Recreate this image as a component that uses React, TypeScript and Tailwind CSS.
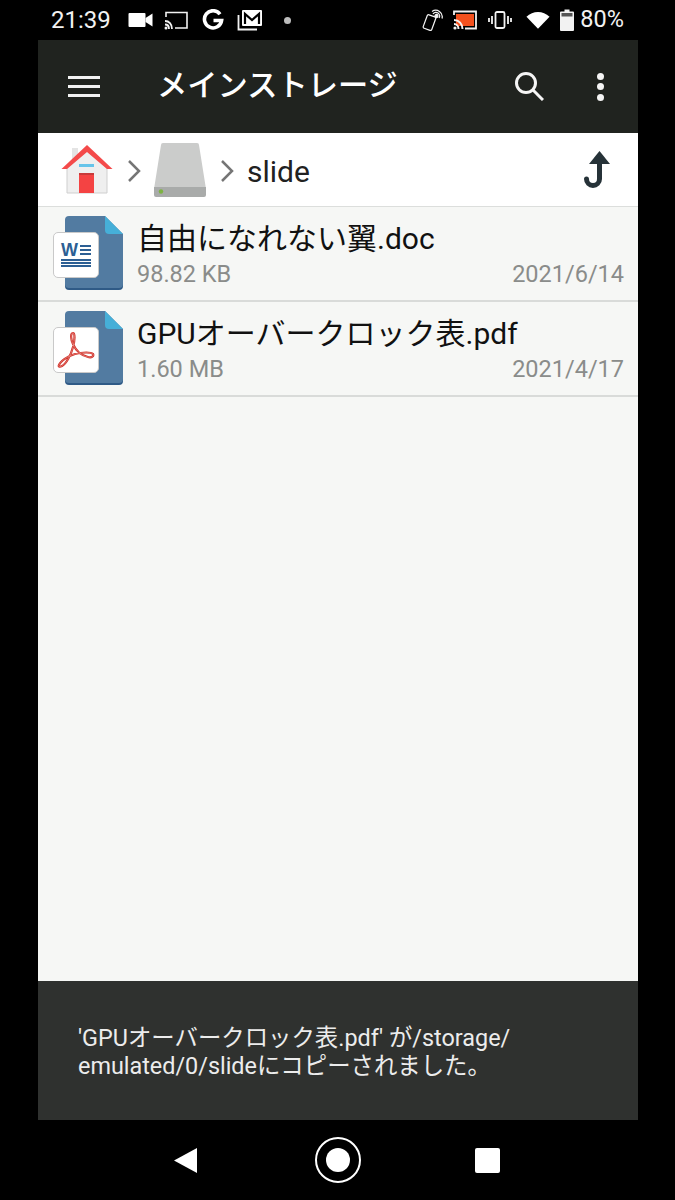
import React from "react";

const font = "font-['Roboto','Noto_Sans_CJK_JP',sans-serif]";

const StatusBar = () => {
  return (
    <div className="h-10 flex items-center justify-between text-[#f2f2f2] pl-[51px] pr-[51px]">
      <div className="flex items-center">
        <span className="text-[24px] leading-none w-[76px]">21:39</span>
        <svg width="25" height="16" viewBox="0 0 24 16" className="ml-[1px]" fill="#fff">
          <rect x="0" y="1" width="17" height="14" rx="1" />
          <path d="M17 6 L24 1.5 V14.5 L17 10z" />
        </svg>
        <svg width="24" height="20" viewBox="0 0 24 20" className="ml-[11px]" fill="none" stroke="#f2f2f2" strokeWidth="1.6">
          <path d="M2 7V2.5H23V18H11" />
          <path d="M1 11c4 0 7 3 7 8M1 14.5c2.500 0 4 2 4 4.500" strokeWidth="1.800" />
          <circle cx="2" cy="18" r="1.500" fill="#f2f2f2" stroke="none" />
        </svg>
        <svg width="22" height="22" viewBox="0 0 22 22" className="ml-[14px]" fill="none" stroke="#fff" strokeWidth="3.600">
          <path d="M18 5.200A8.600 8.600 0 1 0 19.600 11.500H11.500" />
        </svg>
        <svg width="26" height="22" viewBox="0 0 26 22" className="ml-[13px]">
          <path d="M1.500 6V20.500H20" fill="none" stroke="#f2f2f2" strokeWidth="1.800" />
          <rect x="5" y="1" width="20" height="16" rx="1" fill="#fff" />
          <path d="M8 15V5l7 6 7-6v10" fill="none" stroke="#000" strokeWidth="2.200" />
        </svg>
        <div className="w-[7px] h-[7px] rounded-full bg-[#bdbdbd] ml-[21px]" />
      </div>
      <div className="flex items-center">
        <svg width="22" height="22" viewBox="0 0 22 22" fill="none" stroke="#f2f2f2" strokeWidth="1.300">
          <rect x="3" y="7" width="9.500" height="15" rx="1.500" transform="rotate(20 8 14) scale(0.95)" />
          <path d="M11 5a3.500 3.500 0 0 1 6 4M10 2.500a6.500 6.500 0 0 1 10 7" />
          <circle cx="14.500" cy="7" r="1.500" fill="#f2f2f2" />
        </svg>
        <svg width="24" height="20" viewBox="0 0 24 20" className="ml-[9px]">
          <rect x="3" y="4" width="18" height="12" fill="#f4511e" />
          <path d="M1 5V1.500H23V18.500H12" fill="none" stroke="#f2f2f2" strokeWidth="1.800" />
          <path d="M1 10c5 0 8.500 4 8.500 9M1 14c2.500 0 4.500 2 4.500 5" fill="none" stroke="#f2f2f2" strokeWidth="2" />
          <circle cx="2" cy="18" r="1.600" fill="#f2f2f2" />
        </svg>
        <svg width="24" height="18" viewBox="0 0 24 18" className="ml-[11px]" fill="none" stroke="#f2f2f2">
          <rect x="7.500" y="1" width="9" height="16" rx="1.500" strokeWidth="1.800" />
          <path d="M4 5v8M1 7v4M20 5v8M23 7v4" strokeWidth="1.800" />
        </svg>
        <svg width="24" height="20" viewBox="0 0 26 20" className="ml-[14px]" fill="#fff">
          <path d="M0.500 6.500C7.500 -0.500 18.500 -0.500 25.500 6.500L13 19.500z" />
        </svg>
        <svg width="14" height="22" viewBox="0 0 14 22" className="ml-[10px]" fill="#f2f2f2">
          <path d="M4.500 0.500H9.500V2.500H13a1 1 0 0 1 1 1V21a1 1 0 0 1-1 1H1a1 1 0 0 1-1-1V3.500a1 1 0 0 1 1-1H4.500z" />
          <path d="M1.500 4H12.500V7.500H1.500z" fill="#555" />
        </svg>
        <span className="text-[23.5px] leading-none ml-[6px]">80%</span>
      </div>
    </div>
  );
};

const Toolbar = () => {
  return (
    <div className="h-[93px] bg-[#20231f] flex items-center text-white">
      <svg width="32" height="22" viewBox="0 0 32 22" className="ml-[30px]" fill="#f2f2f2">
        <rect x="0" y="0" width="32" height="3" />
        <rect x="0" y="9" width="32" height="3" />
        <rect x="0" y="18" width="32" height="3" />
      </svg>
      <span className="ml-[57px] text-[30.25px] leading-none font-medium">メインストレージ</span>
      <svg width="30" height="30" viewBox="0 0 30 30" className="ml-auto -mt-[2px]" fill="none" stroke="#f5f5f5" strokeWidth="3">
        <circle cx="12" cy="12" r="9.500" />
        <path d="M19 19L29 29" />
      </svg>
      <div className="flex flex-col gap-[3.500px] ml-[53px] mr-[34px]">
        <div className="w-[7px] h-[7px] rounded-full bg-[#f5f5f5]" />
        <div className="w-[7px] h-[7px] rounded-full bg-[#f5f5f5]" />
        <div className="w-[7px] h-[7px] rounded-full bg-[#f5f5f5]" />
      </div>
    </div>
  );
};

const Chevron = () => (
  <svg width="14" height="24" viewBox="0 0 14 24" fill="none" stroke="#757575" strokeWidth="2.500">
    <path d="M2 2L12 12L2 22" />
  </svg>
);

const Breadcrumb = () => {
  return (
    <div className="h-[74px] bg-white border-b border-[#dcdedc] flex items-center">
      <svg width="52" height="52" viewBox="0 0 52 52" className="ml-[23px]">
        <rect x="11" y="4" width="6" height="12" fill="#e4e4e4" />
        <path d="M6 24L26 7L46 24V49H6z" fill="#efefef" stroke="#cfcfcf" />
        <path d="M0.500 25L26 1L51.500 25H46L26 8L6 25z" fill="#f44a4a" />
        <rect x="18" y="20" width="15" height="3" fill="#66c4ea" />
        <rect x="18" y="29" width="15" height="20" fill="#f44343" />
        <rect x="18" y="29" width="15" height="2" fill="#c83a3a" />
      </svg>
      <div className="ml-[14px] mt-[2px]">
        <Chevron />
      </div>
      <svg width="54" height="54" viewBox="0 0 54 54" className="ml-[12px]">
        <path d="M8 2a2 2 0 0 1 2-2H44a2 2 0 0 1 2 2L53 46H1z" fill="#cbcccb" />
        <path d="M1 44H53V52a2 2 0 0 1-2 2H3a2 2 0 0 1-2-2z" fill="#a9abaa" />
        <circle cx="8" cy="48.500" r="2.200" fill="#7cb342" />
      </svg>
      <div className="ml-[13px] mt-[2px]">
        <Chevron />
      </div>
      <span className="ml-[13px] mt-[4px] text-[30px] leading-none text-[#212121]">slide</span>
      <svg width="28" height="38" viewBox="0 0 28 38" className="ml-auto mr-[27px]" fill="none">
        <path d="M16.500 0L27 13H6z" fill="#263238" />
        <path d="M16.500 10V28a6.500 6.500 0 0 1-13 0" stroke="#263238" strokeWidth="5" strokeLinecap="round" />
      </svg>
    </div>
  );
};

const WordGlyph = () => (
  <div className="w-[30px] -mt-[1px] flex flex-col">
    <div className="flex items-center justify-between h-[14px]">
      <span className="text-[18px] leading-[14px] font-bold text-[#2c5f94] font-['Liberation_Sans',sans-serif]">W</span>
      <div className="w-[11px] flex flex-col gap-[2px]">
        <div className="h-[2px] bg-[#2c5f94]" />
        <div className="h-[2px] bg-[#2c5f94]" />
        <div className="h-[2px] bg-[#2c5f94]" />
      </div>
    </div>
    <div className="mt-[2px] flex flex-col gap-[1px]">
      <div className="h-[2px] bg-[#2c5f94]" />
      <div className="h-[2px] bg-[#2c5f94]" />
      <div className="h-[2px] bg-[#2c5f94]" />
    </div>
  </div>
);

const PdfGlyph = () => (
  <svg width="38" height="38" viewBox="0 0 38 38" fill="none">
    <path
      d="M16 2C13 2 14 9 16 13C19 20 25 25 31 26C35 27 37 25 36 23C34 21 26 21 18 23C10 25 3 31 2 34C1 36 3 36 5 35C9 33 14 24 16 16C18 9 18 2 16 2z"
      stroke="#cf2f27"
      strokeWidth="2.200"
    />
    <path
      d="M16 2C13 2 14 9 16 13C19 20 25 25 31 26C35 27 37 25 36 23C34 21 26 21 18 23C10 25 3 31 2 34C1 36 3 36 5 35C9 33 14 24 16 16C18 9 18 2 16 2z"
      stroke="#f3b0aa"
      strokeWidth="0.500"
    />
  </svg>
);

const FileRow = ({ name, size, date, glyph }: { name: string; size: string; date: string; glyph: React.ReactNode }) => {
  return (
    <div className="h-[95px] border-b-2 border-[#d9dbd9] flex items-center">
      <div className="relative w-[99px] h-[75px] shrink-0">
        <svg width="58" height="74" viewBox="0 0 58 74" className="absolute left-[27px] top-0">
          <path d="M4 0H40L58 18V68a4 4 0 0 1-4 4H4a4 4 0 0 1-4-4V4a4 4 0 0 1 4-4z" transform="translate(0 2)" fill="#2f5a86" />
          <path d="M4 0H40L58 18V68a4 4 0 0 1-4 4H4a4 4 0 0 1-4-4V4a4 4 0 0 1 4-4z" fill="#527ba1" />
          <path d="M40 0L58 18H44a4 4 0 0 1-4-4z" fill="#46afd8" />
        </svg>
        <div className="absolute left-[15px] top-[16px] w-[46px] h-[46px] bg-white rounded-[5px] border border-[#c9c9c9] flex items-center justify-center">
          {glyph}
        </div>
      </div>
      <div className="flex-1 pr-[14px]">
        <div className="text-[30px] leading-[38px] text-[#111] whitespace-nowrap">{name}</div>
        <div className="flex justify-between text-[23.5px] leading-[26px] text-[#8a8c8a] mt-[3px]">
          <span>{size}</span>
          <span>{date}</span>
        </div>
      </div>
    </div>
  );
};

export default function App() {
  return (
    <div className={`w-[675px] h-[1200px] bg-black overflow-hidden flex flex-col ${font}`}>
      <StatusBar />
      <div className="flex-1 mx-[38px] w-[600px] flex flex-col bg-[#f6f7f5]">
        <Toolbar />
        <Breadcrumb />
        <FileRow name="自由になれない翼.doc" size="98.82 KB" date="2021/6/14" glyph={<WordGlyph />} />
        <FileRow name="GPUオーバークロック表.pdf" size="1.60 MB" date="2021/4/17" glyph={<PdfGlyph />} />
        <div className="mt-auto h-[139px] bg-[#2f312f] text-[#ececec] text-[23.4px] leading-[28px] pl-[40px] pt-[43px] whitespace-nowrap">
          'GPUオーバークロック表.pdf' が/storage/
          <br />
          emulated/0/slideにコピーされました。
        </div>
      </div>
      <div className="h-20 flex items-center relative">
        <svg width="24" height="27" viewBox="0 0 24 27" className="ml-[173px]" fill="#fff">
          <path d="M24 1V26L1 13.500z" />
        </svg>
        <svg width="46" height="46" viewBox="0 0 46 46" className="ml-[118px]">
          <circle cx="23" cy="23" r="22" fill="none" stroke="#fff" strokeWidth="2" />
          <circle cx="23" cy="23" r="12" fill="#fff" />
        </svg>
        <div className="w-[25px] h-[25px] bg-white rounded-[2px] ml-[114px]" />
      </div>
    </div>
  );
}
